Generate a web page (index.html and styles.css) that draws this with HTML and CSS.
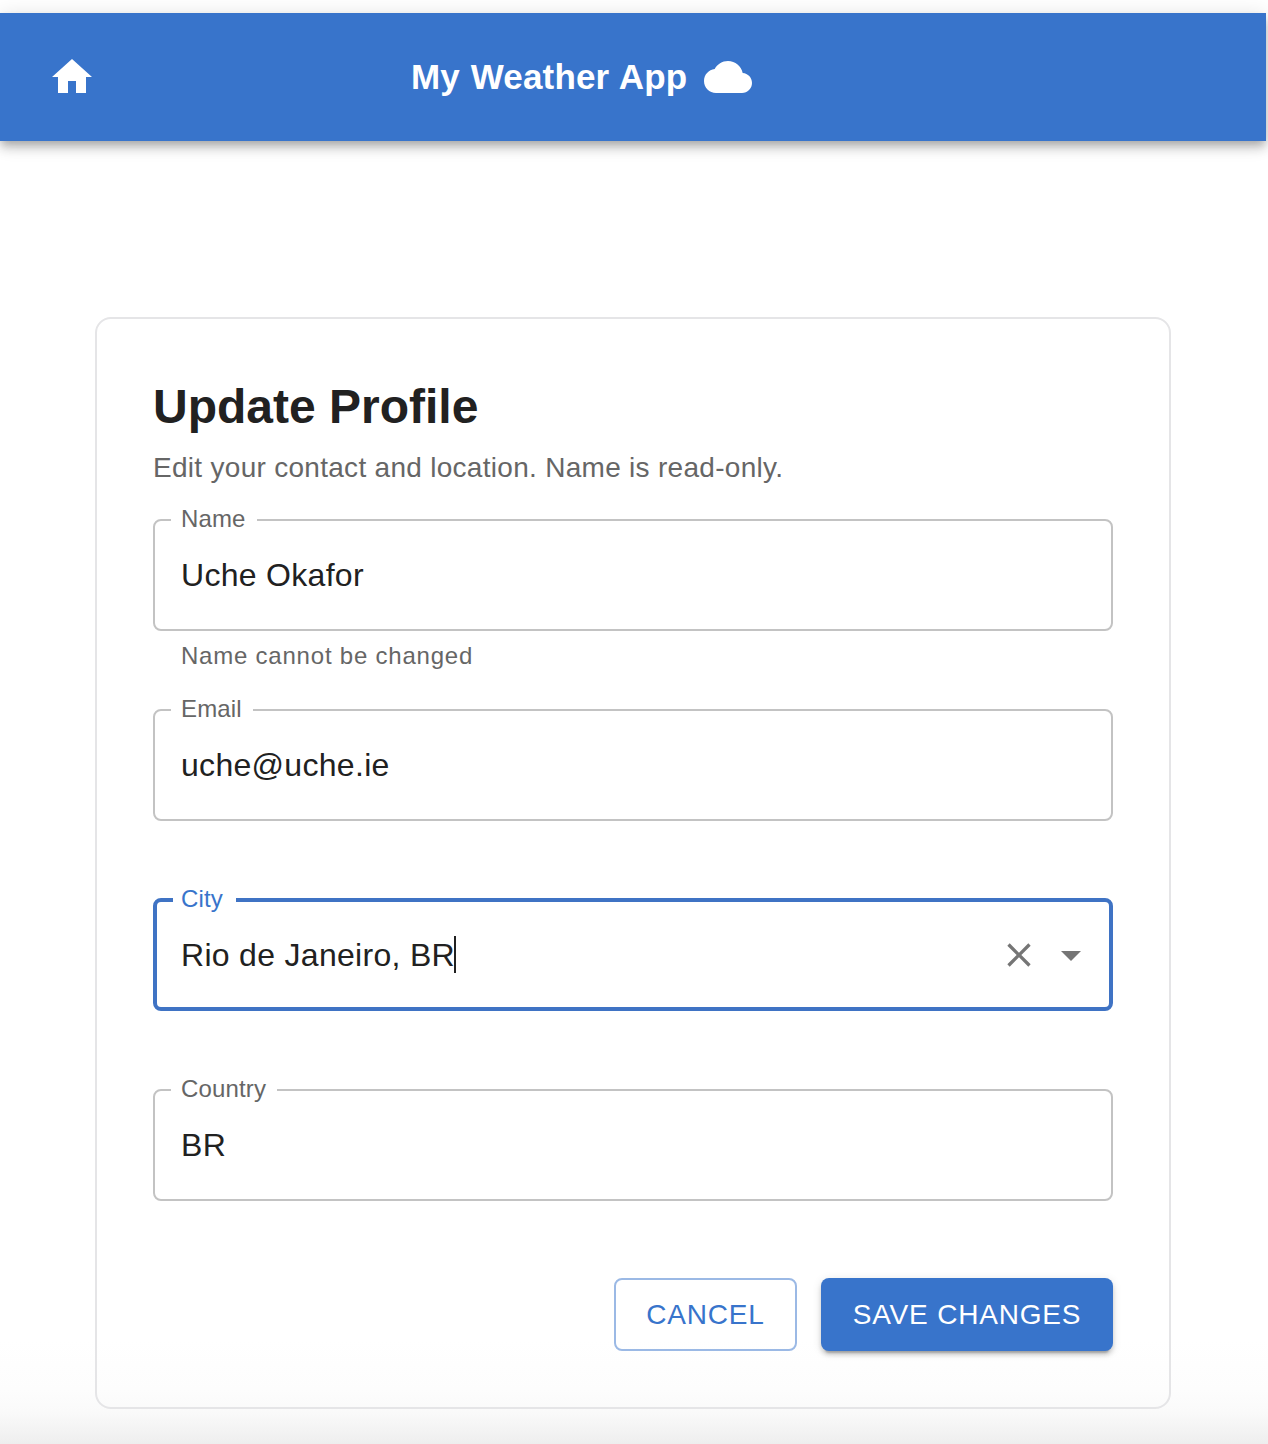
FILE: index.html
```html
<!DOCTYPE html>
<html lang="en">
<head>
<meta charset="utf-8">
<title>My Weather App</title>
<link rel="stylesheet" href="styles.css">
</head>
<body>
<header class="app-bar">
  <a class="home" aria-label="Home"><svg class="icon" viewBox="0 0 24 24"><path d="M10 20v-6h4v6h5v-8h3L12 3 2 12h3v8z"/></svg></a>
  <div class="brand">
    <span class="brand-name">My Weather App</span>
    <svg class="icon" viewBox="0 0 24 24"><path d="M19.35 10.04C18.67 6.59 15.64 4 12 4 9.11 4 6.6 5.64 5.35 8.04 2.34 8.36 0 10.91 0 14c0 3.31 2.69 6 6 6h13c2.76 0 5-2.24 5-5 0-2.64-2.05-4.78-4.65-4.96z"/></svg>
  </div>
</header>
<main class="card">
  <h1 class="title">Update Profile</h1>
  <p class="subtitle">Edit your contact and location. Name is read-only.</p>
  <div class="field">
    <fieldset class="outline"><legend class="label">Name</legend><div class="control"><span class="value">Uche Okafor</span></div></fieldset>
    <p class="helper">Name cannot be changed</p>
  </div>
  <div class="field">
    <fieldset class="outline"><legend class="label">Email</legend><div class="control"><span class="value">uche@uche.ie</span></div></fieldset>
  </div>
  <div class="field">
    <fieldset class="outline focused"><legend class="label">City</legend><div class="control"><span class="value">Rio de Janeiro, BR</span><span class="caret"></span>
      <span class="adornments">
        <svg class="icon icon-clear" viewBox="0 0 24 24"><path d="M19 6.41L17.59 5 12 10.59 6.41 5 5 6.41 10.59 12 5 17.59 6.41 19 12 13.41 17.59 19 19 17.59 13.41 12z"/></svg>
        <svg class="icon" viewBox="0 0 24 24"><path d="M7 10l5 5 5-5z"/></svg>
      </span></div></fieldset>
  </div>
  <div class="field">
    <fieldset class="outline"><legend class="label">Country</legend><div class="control"><span class="value">BR</span></div></fieldset>
  </div>
  <div class="actions">
    <button class="button button-outlined">CANCEL</button>
    <button class="button button-filled">SAVE CHANGES</button>
  </div>
</main>
</body>
</html>
```

FILE: styles.css
```css
* { box-sizing: border-box; }

html { background: #fff; }

body {
  margin: 0;
  height: 1444px;
  padding-top: 13px;
  overflow: hidden;
  font-family: "Liberation Sans", Arial, sans-serif;
  color: #212121;
  background: linear-gradient(to bottom, #fff 1340px, #fdfdfd 1390px, #fafafa 1412px, #eee 1444px);
}

.icon { width: 48px; height: 48px; fill: currentColor; flex: none; display: block; }

.app-bar {
  display: grid;
  grid-template-columns: 363px 1fr;
  align-items: center;
  width: 1266px;
  height: 128px;
  padding: 0 48px;
  color: #fff;
  background: #3874cb;
  box-shadow: 0 4px 8px -2px rgba(0,0,0,.2), 0 8px 10px rgba(0,0,0,.14), 0 2px 20px rgba(0,0,0,.12);
}

.brand { display: flex; align-items: center; gap: 16px; }
.brand-name { width: 277px; font-size: 35px; font-weight: 700; letter-spacing: .15px; word-spacing: 1px; white-space: nowrap; }

.card {
  width: 1076px;
  height: 1092px;
  margin: 176px 0 0 95px;
  padding: 56px;
  border: 2px solid #e5e5e7;
  border-radius: 16px;
}

.title { margin: 0 0 9px; font-size: 48px; line-height: 64px; }
.subtitle { margin: 0 0 31px; font-size: 28px; line-height: 40px; letter-spacing: .29px; color: #666; }

.field { display: flow-root; height: 190px; }

.outline {
  height: 123px;
  margin: -11px 0 0;
  padding: 0 16px;
  border: 2px solid #c3c3c3;
  border-radius: 8px;
}

.label {
  height: 24px;
  padding: 0 11px 0 10px;
  font-size: 24px;
  line-height: 22px;
  letter-spacing: .15px;
  color: #666;
}

.control {
  display: flex;
  align-items: center;
  height: 86px;
  padding-left: 10px;
}
.value { font-size: 32px; letter-spacing: .3px; white-space: nowrap; }

.helper { margin: 5px 28px 0; font-size: 24px; line-height: 40px; letter-spacing: .78px; color: #666; }

.focused { padding: 0 14px 0 16px; border: 4px solid #3f73c4; }
.focused .label { padding: 0 13px 0 8px; color: #3874cb; }
.focused .control { padding-left: 8px; }
.caret { width: 2px; height: 37px; margin: -1px 0 0 -1px; background: #212121; }
.adornments { display: flex; align-items: center; gap: 8px; margin-left: auto; color: #757575; }
.icon-clear { width: 40px; height: 40px; }

.actions { display: flex; justify-content: flex-end; gap: 24px; margin-top: -1px; }
.button {
  height: 73px;
  padding: 0;
  border: 0;
  border-radius: 8px;
  font: 28px "Liberation Sans", Arial, sans-serif;
  letter-spacing: .8px;
}
.button-outlined { width: 183px; color: #3874cb; background: transparent; border: 2px solid #9bb9e5; }
.button-filled {
  width: 292px;
  color: #fff;
  background: #3874cb;
  box-shadow: 0 6px 2px -4px rgba(0,0,0,.2), 0 4px 4px rgba(0,0,0,.14), 0 2px 10px rgba(0,0,0,.12);
}
```
